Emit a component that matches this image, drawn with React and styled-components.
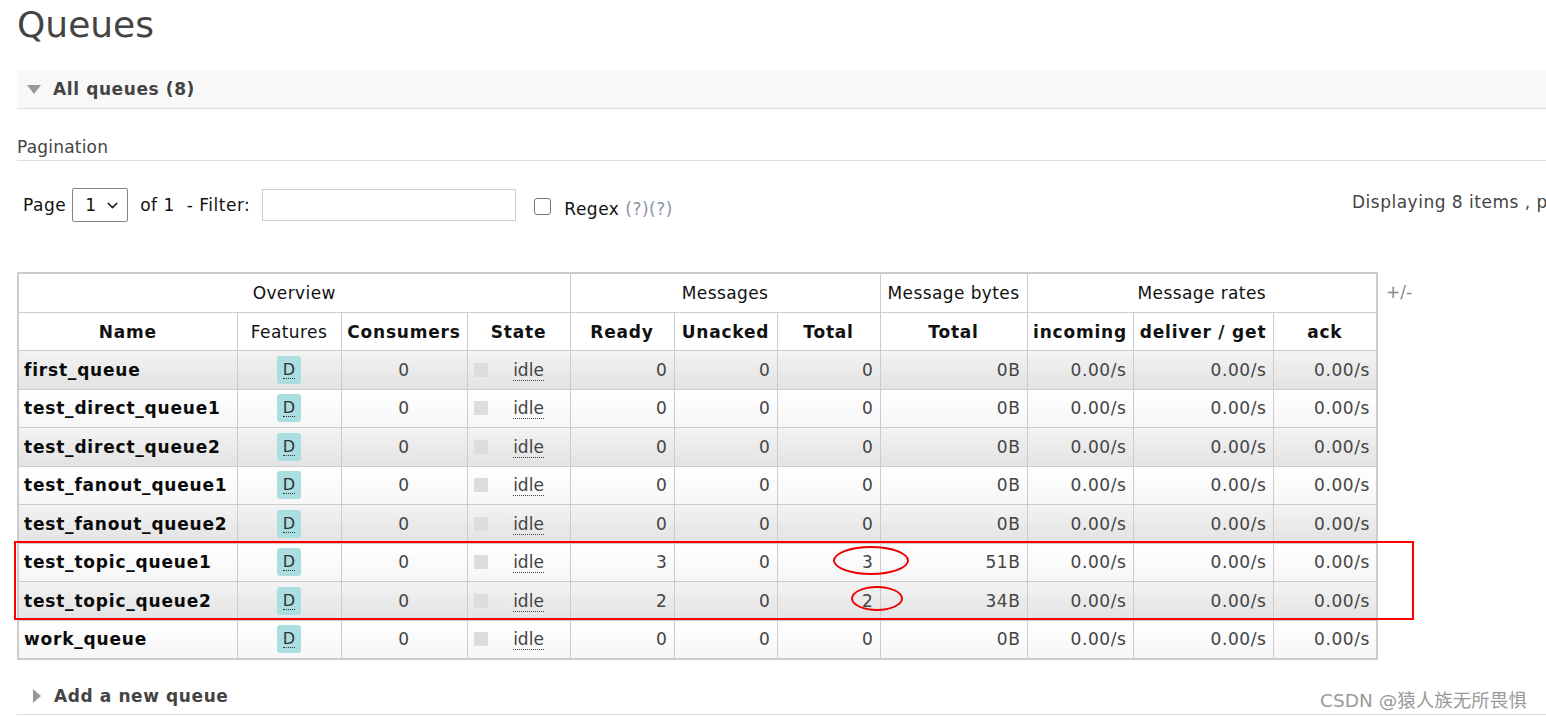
import styled, { createGlobalStyle } from 'styled-components';
import { ChevronDown } from 'lucide-react';

const GlobalStyle = createGlobalStyle`
  html, body {
    margin: 0;
    padding: 0;
    overflow: hidden;
    background: #fff;
  }
  body {
    font-family: "DejaVu Sans", Verdana, sans-serif;
    color: #444;
  }
`;

const Page = styled.div`
  position: relative;
  width: 1800px;
  height: 717px;
  padding-left: 17px;
  box-sizing: border-box;
`;

const Title = styled.h1`
  margin: 0;
  font-size: 36px;
  font-weight: normal;
  line-height: 50px;
  color: #444;
`;

const SectionHeader = styled.div`
  display: flex;
  align-items: center;
  height: ${(p) => (p.$open ? 38 : 36)}px;
  margin-top: ${(p) => p.$top}px;
  padding-left: ${(p) => (p.$open ? 10 : 16)}px;
  background: ${(p) => (p.$open ? '#f8f8f8' : '#fff')};
  border-bottom: 1px solid #ddd;
  gap: ${(p) => (p.$open ? 12 : 13)}px;
`;

const TriangleDown = styled.span`
  width: 0;
  height: 0;
  border-left: 7.5px solid transparent;
  border-right: 7.5px solid transparent;
  border-top: 9px solid #999;
`;

const TriangleRight = styled.span`
  width: 0;
  height: 0;
  border-top: 7.5px solid transparent;
  border-bottom: 7.5px solid transparent;
  border-left: 8px solid #999;
`;

const SectionTitle = styled.h2`
  margin: 0;
  font-size: 17px;
  font-weight: bold;
  letter-spacing: 0.6px;
  color: #444;
`;

const SubHeading = styled.h3`
  margin: 28px 0 0;
  font-size: 17px;
  font-weight: normal;
  letter-spacing: 0.2px;
  color: #444;
  padding-bottom: 3px;
  border-bottom: 1px solid #ddd;
`;

const PaginationRow = styled.div`
  display: flex;
  align-items: center;
  margin-top: 27px;
  padding-left: 6px;
  font-size: 17px;
  letter-spacing: 0.5px;
  color: #111;
`;

const PagerControls = styled.div`
  flex: 0 0 1329px;
  display: flex;
  align-items: center;
`;

const Label = styled.span`
  margin-right: ${(p) => p.$gap || 0}px;
`;

const SelectWrap = styled.div`
  position: relative;
  width: 56px;
  height: 34px;
  margin: 0 12px 0 6px;
  svg {
    position: absolute;
    right: 7px;
    top: 9px;
    pointer-events: none;
  }
`;

const Select = styled.select`
  appearance: none;
  width: 100%;
  height: 100%;
  box-sizing: border-box;
  border: 1px solid #858585;
  border-radius: 2px;
  background: #fff;
  padding-left: 12px;
  font-family: inherit;
  font-size: 17px;
  color: #111;
`;

const FilterInput = styled.input`
  width: 254px;
  height: 32px;
  box-sizing: border-box;
  border: 1px solid #ccc;
  margin-left: 12px;
  margin-right: 18px;
  font-family: inherit;
`;

const Checkbox = styled.input`
  appearance: none;
  width: 17px;
  height: 17px;
  margin: 3px 13px 0 0;
  border: 1px solid #767676;
  border-radius: 3px;
  background: #fff;
`;

const RegexLabel = styled.span`
  margin-top: 8px;
  color: #111;
`;

const Help = styled.span`
  color: #8a95a1;
`;

const Displaying = styled.span`
  color: #444;
  margin-top: -6px;
`;

const TableArea = styled.div`
  position: relative;
  display: flex;
  align-items: flex-start;
  margin-top: 50px;
`;

const Table = styled.table`
  border-collapse: collapse;
  table-layout: fixed;
  width: 1359px;
  border: 2px solid #ccc;
`;

const GroupTh = styled.th`
  height: 38px;
  padding: 0;
  border: 1px solid #ccc;
  font-size: 17px;
  font-weight: normal;
  letter-spacing: 0.4px;
  color: #111;
  background: #fff;
`;

const ColTh = styled.th`
  height: 37px;
  padding: 0 2px;
  border: 1px solid #ccc;
  font-size: 17px;
  font-weight: ${(p) => (p.$normal ? 'normal' : 'bold')};
  letter-spacing: ${(p) => (p.$normal ? 0.4 : 0.8)}px;
  color: #111;
  background: #fff;
  white-space: nowrap;
`;

const Row = styled.tr`
  height: 38.5px;
  background: ${(p) =>
    p.$alt
      ? 'linear-gradient(#f3f3f3, #e2e2e2)'
      : 'linear-gradient(#ffffff, #f6f6f6)'};
`;

const Cell = styled.td`
  padding: 0 6px;
  border: 1px solid #ccc;
  font-size: 17px;
  letter-spacing: ${(p) => (p.$num ? 0.6 : 0)}px;
  color: #444;
  text-align: ${(p) => p.$align || 'left'};
  white-space: nowrap;
`;

const NameCell = styled(Cell)`
  padding-left: 5px;
  font-weight: bold;
  letter-spacing: 0.8px;
  color: #0a0a0a;
`;

const Badge = styled.abbr`
  display: inline-flex;
  align-items: center;
  justify-content: center;
  width: 24px;
  height: 28px;
  border-radius: 3px;
  background: #abdee0;
  font-size: 16px;
  letter-spacing: 0;
  color: #333;
  text-decoration: none;
  vertical-align: middle;
  span {
    border-bottom: 1px dotted #333;
    line-height: 17px;
  }
`;

const StateBox = styled.div`
  display: flex;
  align-items: center;
`;

const StateDot = styled.span`
  width: 14px;
  height: 14px;
  background: #ddd;
`;

const StateText = styled.abbr`
  flex: 1;
  padding-left: 6px;
  text-align: center;
  text-decoration: none;
  span {
    border-bottom: 1px dotted #444;
  }
`;

const Toggle = styled.span`
  margin: 10px 0 0 8px;
  font-size: 17px;
  color: #888;
`;

const Highlight = styled.div`
  position: absolute;
  left: -3px;
  top: 269px;
  width: 1400px;
  height: 79px;
  box-sizing: border-box;
  border: 2px solid #f00;
  pointer-events: none;
`;

const Ring = styled.div`
  position: absolute;
  box-sizing: border-box;
  border: 2px solid #e00;
  border-radius: 50%;
  pointer-events: none;
`;

const Watermark = styled.div`
  position: absolute;
  left: 1320px;
  top: 686px;
  font-family: "DejaVu Sans", "Noto Sans CJK SC", sans-serif;
  font-size: 18.5px;
  color: #9a9a9a;
  white-space: nowrap;
  text-shadow: 0 0 2px #fff;
`;

const widths = [219, 104, 126, 103, 104, 103, 103, 147, 106, 140, 104];

const queues = [
  { name: 'first_queue', ready: 0, total: 0, bytes: '0B' },
  { name: 'test_direct_queue1', ready: 0, total: 0, bytes: '0B' },
  { name: 'test_direct_queue2', ready: 0, total: 0, bytes: '0B' },
  { name: 'test_fanout_queue1', ready: 0, total: 0, bytes: '0B' },
  { name: 'test_fanout_queue2', ready: 0, total: 0, bytes: '0B' },
  { name: 'test_topic_queue1', ready: 3, total: 3, bytes: '51B' },
  { name: 'test_topic_queue2', ready: 2, total: 2, bytes: '34B' },
  { name: 'work_queue', ready: 0, total: 0, bytes: '0B' },
];

const App = () => {
  return (
    <Page>
      <GlobalStyle />
      <Title>Queues</Title>
      <SectionHeader $open $top={20}>
        <TriangleDown />
        <SectionTitle>All queues (8)</SectionTitle>
      </SectionHeader>

      <SubHeading>Pagination</SubHeading>
      <PaginationRow>
        <PagerControls>
          <Label>Page</Label>
          <SelectWrap>
            <Select defaultValue="1">
              <option value="1">1</option>
            </Select>
            <ChevronDown size={17} strokeWidth={2} color="#222" />
          </SelectWrap>
          <Label $gap={12}>of 1</Label>
          <Label>- Filter:</Label>
          <FilterInput type="text" />
          <Checkbox type="checkbox" />
          <RegexLabel>
            Regex <Help>(?)(?)</Help>
          </RegexLabel>
        </PagerControls>
        <Displaying>Displaying 8 items , page size up to: 100</Displaying>
      </PaginationRow>

      <TableArea>
        <Table>
          <colgroup>
            {widths.map((w, i) => (
              <col key={i} style={{ width: w }} />
            ))}
          </colgroup>
          <thead>
            <tr>
              <GroupTh colSpan={4}>Overview</GroupTh>
              <GroupTh colSpan={3}>Messages</GroupTh>
              <GroupTh>Message bytes</GroupTh>
              <GroupTh colSpan={3}>Message rates</GroupTh>
            </tr>
            <tr>
              <ColTh>Name</ColTh>
              <ColTh $normal>Features</ColTh>
              <ColTh>Consumers</ColTh>
              <ColTh>State</ColTh>
              <ColTh>Ready</ColTh>
              <ColTh>Unacked</ColTh>
              <ColTh>Total</ColTh>
              <ColTh>Total</ColTh>
              <ColTh>incoming</ColTh>
              <ColTh>deliver / get</ColTh>
              <ColTh>ack</ColTh>
            </tr>
          </thead>
          <tbody>
            {queues.map((q, i) => (
              <Row key={q.name} $alt={i % 2 === 0}>
                <NameCell>{q.name}</NameCell>
                <Cell $align="center">
                  <Badge title="durable">
                    <span>D</span>
                  </Badge>
                </Cell>
                <Cell $num $align="center">0</Cell>
                <Cell>
                  <StateBox>
                    <StateDot />
                    <StateText title="idle">
                      <span>idle</span>
                    </StateText>
                  </StateBox>
                </Cell>
                <Cell $num $align="right">{q.ready}</Cell>
                <Cell $num $align="right">0</Cell>
                <Cell $num $align="right">{q.total}</Cell>
                <Cell $num $align="right">{q.bytes}</Cell>
                <Cell $num $align="right">0.00/s</Cell>
                <Cell $num $align="right">0.00/s</Cell>
                <Cell $num $align="right">0.00/s</Cell>
              </Row>
            ))}
          </tbody>
        </Table>
        <Toggle>+/-</Toggle>
        <Highlight />
        <Ring style={{ left: 816, top: 274, width: 76, height: 29 }} />
        <Ring style={{ left: 834, top: 314, width: 52, height: 25 }} />
      </TableArea>

      <SectionHeader $top={18}>
        <TriangleRight />
        <SectionTitle>Add a new queue</SectionTitle>
      </SectionHeader>

      <Watermark>CSDN @猿人族无所畏惧</Watermark>
    </Page>
  );
};

export default App;
